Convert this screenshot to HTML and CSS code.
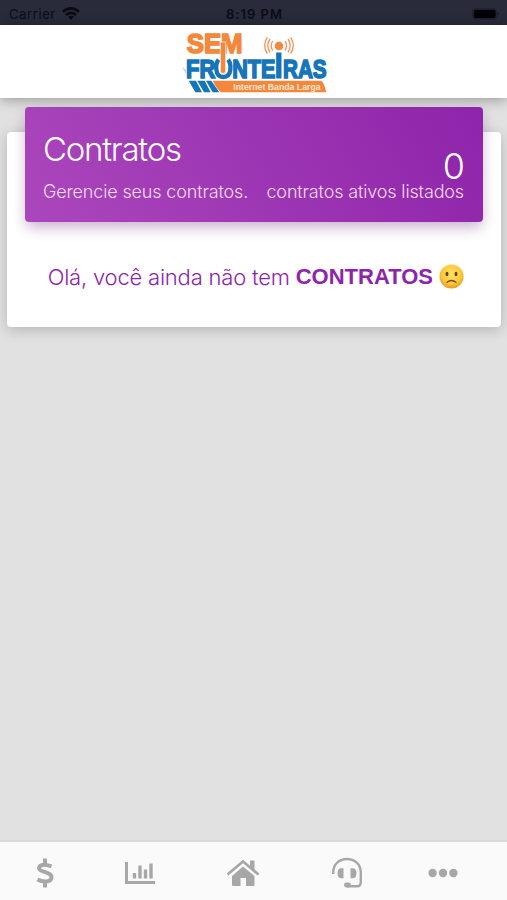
FILE: index.html
```html
<!DOCTYPE html>
<html lang="pt-BR">
<head>
<meta charset="utf-8">
<title>Contratos</title>
<link rel="stylesheet" href="styles.css">
</head>
<body>
<div class="status">
  <span class="carrier">Carrier
    <svg width="18" height="13" viewBox="0 0 18 13" fill="none" stroke="#090a13" stroke-width="2.6"><path d="M1 4.8Q9-2 17 4.8M4 8Q9 3.800 14 8"/><path d="M6.200 9.800Q9 7.600 11.800 9.800L9 12.800Z" fill="#090a13" stroke="none"/></svg>
  </span>
  <span class="time">8:19 PM</span>
  <svg class="battery" width="28" height="12" viewBox="0 0 28 12"><rect x=".5" y=".5" width="24" height="11" rx="3" fill="#1d1d2b"/><rect x="2" y="2" width="21.500" height="8" rx="2" fill="#020205"/><path d="M25.500 4Q28 6 25.500 8Z" fill="#171723"/></svg>
</div>
<header class="header">
  <svg class="logo" width="170" height="73" viewBox="0 3 510 219" role="img" aria-label="Sem Fronteiras">
    <g class="logo-text">
      <text x="50" y="86" font-size="84" textLength="168" lengthAdjust="spacingAndGlyphs" fill="#f5873b" stroke="#f5873b" stroke-width="5">SEM</text>
      <g fill="#1675b8" stroke="#1675b8" stroke-width="5">
        <text x="48" y="161" font-size="78" textLength="88" lengthAdjust="spacingAndGlyphs">FR</text>
        <text x="187" y="161" font-size="78" textLength="129" lengthAdjust="spacingAndGlyphs">NTE</text>
        <text x="339" y="161" font-size="78" textLength="131" lengthAdjust="spacingAndGlyphs">RAS</text>
        <path d="M321 88H332V161H321Z"/>
      </g>
    </g>
    <path d="M146 107Q137 118 139 136Q141 159 160 159Q179 159 181 136Q183 118 174 107" fill="none" stroke="#1675b8" stroke-width="13"/>
    <path d="M151 54H167V145Q159 153 151 145Z" fill="#f5873b" stroke="#fff" stroke-width="2"/>
    <circle cx="327" cy="66" r="13" fill="#f5873b"/>
    <path d="M308 51Q299 65 308 80M345 51Q354 65 345 80M300 45Q287 64 300 85M354 45Q367 64 354 85M292 40Q276 64 292 89M362 40Q378 64 362 89" fill="none" stroke="#f5925a" stroke-width="4"/>
    <path d="M35 128L48 137V149Z" fill="#cbd5df"/>
    <path d="M56 170H78L96 205H76ZM82 170H104L122 205H102ZM108 170H124L148 205H128Z" fill="#1675b8"/>
    <path d="M128 170H452Q461 171 469 205H153Q139 193 128 170Z" fill="#f5873b"/>
    <text x="190" y="198" class="tagline" font-size="27" textLength="262" lengthAdjust="spacingAndGlyphs" fill="#ffe8d4">Internet Banda Larga</text>
  </svg>
</header>
<main class="content">
  <section class="card">
    <div class="card-header">
      <div>
        <h1 class="title">Contratos</h1>
        <p class="caption left">Gerencie seus contratos.</p>
      </div>
      <div class="summary">
        <div class="count">0</div>
        <p class="caption right">contratos ativos listados</p>
      </div>
    </div>
    <div class="message">
      <span class="greeting">Olá, você ainda não tem</span>
      <strong class="keyword">CONTRATOS</strong>
      <svg class="face" width="25" height="25" viewBox="0 0 25 25"><defs><radialGradient id="skin" cx=".5" cy=".4" r=".6"><stop offset="0" stop-color="#ffe26a"/><stop offset=".65" stop-color="#fdca3c"/><stop offset="1" stop-color="#e99a1b"/></radialGradient></defs><circle cx="12.500" cy="12.500" r="12" fill="url(#skin)"/><ellipse cx="8" cy="10" rx="1.500" ry="2.200" fill="#6b4314"/><ellipse cx="17" cy="10" rx="1.500" ry="2.200" fill="#6b4314"/><path d="M8 18.300Q12.500 14.700 17 18.300" fill="none" stroke="#7b4c17" stroke-width="1.300" stroke-linecap="round"/></svg>
    </div>
  </section>
</main>
<nav class="tabs">
  <svg width="30" height="32" viewBox="0 0 30 32" fill="none" stroke="#a7a7a7" stroke-width="4"><path d="M21.500 9.300Q10 5.700 9 11C8.500 15.500 22 14.500 21.500 20.500C21 26 12 25 7.500 22.500M15 1.500V7M15 25V30.500"/></svg>
  <svg width="30" height="32" viewBox="0 0 30 32" fill="none" stroke="#a7a7a7"><path d="M1.500 5V25.500H30" stroke-width="3"/><path d="M9.500 16V21.500M15 8.500V21.500M20.500 12.500V21.500M26 6.500V21.500" stroke-width="3.400"/></svg>
  <svg width="34" height="32" viewBox="0 0 34 32" fill="#a7a7a7"><path d="M17 9.500L28.500 19V28Q28.500 29 27.500 29H20V21H14.500V29H7Q6 29 6 28V19Z"/><path d="M1.500 17.500L17 4.500L32.500 17.500" fill="none" stroke="#a7a7a7" stroke-width="2.700"/><path d="M24 3.500H28.500V14L24 10Z"/></svg>
  <svg width="30" height="32" viewBox="0 0 30 32" fill="#a7a7a7"><path d="M1.200 17V15.500C1.200-2.500 28.800-2.500 28.800 15.500V25Q28.800 29.300 25 29.300H15" fill="none" stroke="#a7a7a7" stroke-width="2.400"/><path d="M11.500 11.300V21.300H9.500Q5.500 21.300 5.500 16.300T9.500 11.300ZM18.500 11.300H20.500Q24.500 11.300 24.500 16.300T20.500 21.300H18.500Z"/><rect x="12" y="25.500" width="7" height="5" rx="2.400"/></svg>
  <svg width="30" height="32" viewBox="0 0 30 32" fill="#a7a7a7"><circle cx="4.600" cy="16" r="4.200"/><circle cx="15" cy="16" r="4.200"/><circle cx="25.400" cy="16" r="4.200"/></svg>
</nav>
</body>
</html>
```
FILE: styles.css
```css
* { box-sizing: border-box; }
body {
  margin: 0;
  height: 900px;
  display: flex;
  flex-direction: column;
  overflow: hidden;
  background: #e1e1e1;
  font-family: Inter, "Liberation Sans", sans-serif;
}
h1, p { margin: 0; font-weight: 300; }
.status {
  height: 25px;
  display: grid;
  grid-template-columns: 1fr auto 1fr;
  align-items: center;
  padding: 2px 7px 0 9px;
  background: #292a3a;
  color: #0b0c16;
  font-size: 13px;
}
.carrier { display: flex; align-items: center; gap: 6px; letter-spacing: .6px; }
.time { font-weight: 600; letter-spacing: 1px; }
.battery { justify-self: end; }
.header {
  position: relative;
  height: 73px;
  display: flex;
  justify-content: center;
  background: #fff;
  box-shadow: 0 2px 12px rgba(0, 0, 0, .32);
}
.logo { display: block; margin-left: 3px; }
.logo-text, .tagline { font-family: "Liberation Sans", sans-serif; font-weight: 700; }
.content { flex: 1; padding: 34px 6px 0 7px; }
.card {
  display: flow-root;
  height: 195px;
  padding: 0 18px;
  border-radius: 4px;
  background: #fff;
  box-shadow: 0 3px 14px rgba(0, 0, 0, .2);
}
.card-header {
  height: 115px;
  transform: translateY(-25px);
  display: flex;
  justify-content: space-between;
  padding: 0 19px 0 18px;
  border-radius: 4px;
  background: linear-gradient(60deg, #ab47bc, #8e24aa);
  color: #fff;
  white-space: nowrap;
  box-shadow: 0 6px 16px rgba(0, 0, 0, .1), 0 7px 14px -3px rgba(156, 39, 176, .3);
}
.title { padding-top: 22px; font-size: 33px; line-height: 40px; letter-spacing: -1.25px; }
.caption { font-size: 18px; line-height: 22px; letter-spacing: -.15px; color: #f5ddfa; }
.left { padding-top: 12px; }
.summary { text-align: right; }
.count { padding-top: 45px; font-size: 36px; line-height: 28px; }
.count { font-weight: 300; letter-spacing: -1px; }
.right { padding-top: 1px; }
.message {
  height: 28px;
  margin-top: 15px;
  padding-right: 19px;
  display: flex;
  align-items: center;
  justify-content: flex-end;
  gap: 6px;
  color: #8e24aa;
  font-size: 22px;
  white-space: nowrap;
}
.greeting { padding-top: 1px; font-weight: 300; letter-spacing: -.2px; }
.keyword { padding-top: 2px; font-family: "Liberation Sans", sans-serif; font-weight: 700; }
.tabs {
  height: 60px;
  display: grid;
  grid-template-columns: 90px 99px 108px 99px 93px;
  align-items: center;
  justify-items: center;
  padding-top: 3px;
  border-top: 2px solid #d9d9d9;
  background: #fafafa;
}
```
